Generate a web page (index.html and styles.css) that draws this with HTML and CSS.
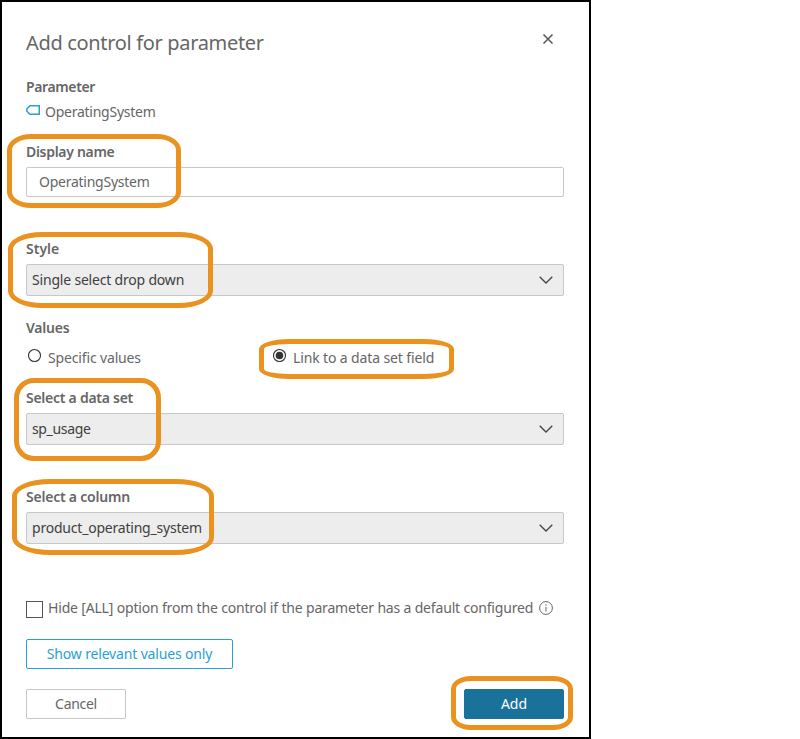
FILE: index.html
```html
<!DOCTYPE html>
<html lang="en">
<head>
<meta charset="utf-8">
<title>Add control for parameter</title>
<link rel="stylesheet" href="styles.css">
</head>
<body>
<main class="dialog">
  <header class="header">
    <h1 class="title"><span class="t-title">Add control for parameter</span></h1>
    <svg class="close" width="12" height="12" viewBox="0 0 12 12"><path d="M1.5 1.5L10.5 10.5M10.5 1.5L1.5 10.5"/></svg>
  </header>

  <section class="field parameter">
    <div class="label"><span class="t-parameter">Parameter</span></div>
    <div class="param-value">
      <svg class="tag" width="14" height="10" viewBox="0 0 14 10"><path d="M4 .75H13.25V9.25H4L.9 6.2V3.8Z"/></svg>
      <span class="t-os">OperatingSystem</span>
    </div>
  </section>

  <section class="field display">
    <div class="label"><span class="t-display">Display name</span></div>
    <div class="input"><span class="t-os">OperatingSystem</span></div>
  </section>

  <section class="field style">
    <div class="label"><span class="t-style">Style</span></div>
    <div class="select"><span class="t-single">Single select drop down</span><svg class="chevron" width="14" height="8" viewBox="0 0 14 8"><path d="M.7 .7L7 7L13.3 .7"/></svg></div>
  </section>

  <section class="field values">
    <div class="label"><span class="t-values">Values</span></div>
    <div class="radios">
      <div class="radio"><svg width="14" height="14" viewBox="0 0 14 14"><circle class="ring" cx="7.5" cy="7.5" r="6"/></svg><span class="t-specific">Specific values</span></div>
      <div class="radio"><svg width="14" height="14" viewBox="0 0 14 14"><circle class="ring" cx="7.5" cy="7.5" r="6"/><circle class="dot" cx="7.5" cy="7.5" r="3.8"/></svg><span class="t-link">Link to a data set field</span></div>
    </div>
  </section>

  <section class="field dataset">
    <div class="label"><span class="t-dataset">Select a data set</span></div>
    <div class="select"><span class="t-usage">sp_usage</span><svg class="chevron" width="14" height="8" viewBox="0 0 14 8"><path d="M.7 .7L7 7L13.3 .7"/></svg></div>
  </section>

  <section class="field column">
    <div class="label"><span class="t-column">Select a column</span></div>
    <div class="select"><span class="t-product">product_operating_system</span><svg class="chevron" width="14" height="8" viewBox="0 0 14 8"><path d="M.7 .7L7 7L13.3 .7"/></svg></div>
  </section>

  <div class="hide-all">
    <span class="checkbox"></span>
    <span class="t-hide">Hide [ALL] option from the control if the parameter has a default configured</span>
    <svg class="info" width="14" height="14" viewBox="0 0 14 14"><circle cx="7" cy="7" r="6.4"/><path d="M7 5.8V10.6M7 3.2V4.6"/></svg>
  </div>

  <button class="button relevant"><span class="t-relevant">Show relevant values only</span></button>

  <footer class="footer">
    <button class="button cancel"><span class="t-cancel">Cancel</span></button>
    <button class="button add"><span class="t-add">Add</span></button>
  </footer>

  <div class="mark mark-display"></div>
  <div class="mark mark-style"></div>
  <div class="mark mark-link"></div>
  <div class="mark mark-dataset"></div>
  <div class="mark mark-column"></div>
  <div class="mark mark-add"></div>
</main>
</body>
</html>
```
FILE: styles.css
```css
* { box-sizing: border-box; }
body { margin: 0; background: #fff; font: 14px/20px "Noto Sans", "Open Sans", sans-serif; color: #666; }
.dialog { position: relative; width: 591px; height: 739px; padding: 26px 25px 0 24px; border: 2px solid #000; background: #fff; }
.dialog span { white-space: nowrap; }
.header { display: flex; justify-content: space-between; height: 30px; }
.title { margin: 0; font-size: 20px; font-weight: 400; line-height: 30px; }
.close { margin: 5px 10px 0 0; fill: none; stroke: #5a5a5a; stroke-width: 1.6; }
.label { height: 20px; font-weight: 600; color: #666; margin-bottom: 5px; }
.parameter { margin-top: 19px; }
.param-value { display: flex; height: 20px; gap: 5px; }
.tag { margin-top: 3px; fill: none; stroke: #2a9fd6; stroke-width: 1.5; }
.display { margin-top: 20px; }
.input { height: 30px; padding-left: 12px; border: 1px solid #c8c8c8; border-radius: 2px; line-height: 28px; }
.style { margin-top: 42px; }
.select { display: flex; justify-content: space-between; align-items: center; height: 32px; padding: 0 10px 0 5px; border: 1px solid #c8c8c8; border-radius: 2px; background: #ededed; color: #404040; }
.chevron { fill: none; stroke: #444; stroke-width: 1.3; }
.values { margin-top: 22px; }
.radios { display: grid; grid-template-columns: 245px 1fr; margin-top: 10px; padding-left: 1px; }
.radio { display: flex; gap: 7px; height: 20px; }
.radio svg { overflow: visible; }
.ring { fill: #fff; stroke: #333; stroke-width: 1.1; }
.dot { fill: #333; }
.dataset { margin-top: 20px; }
.column { margin-top: 42px; }
.hide-all { display: flex; height: 20px; margin-top: 54px; }
.checkbox { flex: none; width: 17px; height: 17px; margin: 3px 5px 0 0; border: 1px solid #555; }
.info { flex: none; margin: 3px 0 0 6px; fill: none; stroke: #666; stroke-width: 1; }
.button { display: flex; align-items: center; justify-content: center; width: 100px; height: 30px; padding: 0; border: 1px solid #c8c8c8; border-radius: 2px; background: #fff; color: #666; font: inherit; }
.relevant { width: 207px; margin-top: 21px; border-color: #2a9fd6; color: #2a9fd6; }
.footer { display: flex; justify-content: space-between; margin-top: 20px; }
.add { border-color: #1a729a; background: #1a729a; color: #fff; }

.t-title { letter-spacing: -.33px; }
.t-parameter { letter-spacing: -.38px; }
.t-os { letter-spacing: -.25px; }
.t-display { letter-spacing: -.3px; }
.t-single { letter-spacing: -.19px; }
.t-values { letter-spacing: -.2px; }
.t-specific { letter-spacing: -.15px; }
.t-link { letter-spacing: -.13px; }
.t-dataset { letter-spacing: -.26px; }
.t-usage { letter-spacing: -.35px; }
.t-column { letter-spacing: -.22px; }
.t-product { letter-spacing: -.21px; }
.t-hide { letter-spacing: -.175px; }
.t-relevant { letter-spacing: -.16px; }
.t-cancel { letter-spacing: -.3px; }

.mark { position: absolute; border: 5px solid #ea921f; }
.mark-display { left: 5px; top: 132px; width: 174px; height: 74px; border-radius: 24px / 16px; }
.mark-style { left: 6px; top: 230px; width: 205px; height: 76px; border-radius: 34px / 17px; }
.mark-link { left: 257px; top: 337px; width: 195px; height: 40px; border-radius: 30px / 10px; }
.mark-dataset { left: 12px; top: 376px; width: 147px; height: 83px; border-radius: 20px / 20px; }
.mark-column { left: 10px; top: 477px; width: 202px; height: 76px; border-radius: 38px / 17px; }
.mark-add { left: 449px; top: 674px; width: 122px; height: 54px; border-radius: 20px / 13px; }
```
